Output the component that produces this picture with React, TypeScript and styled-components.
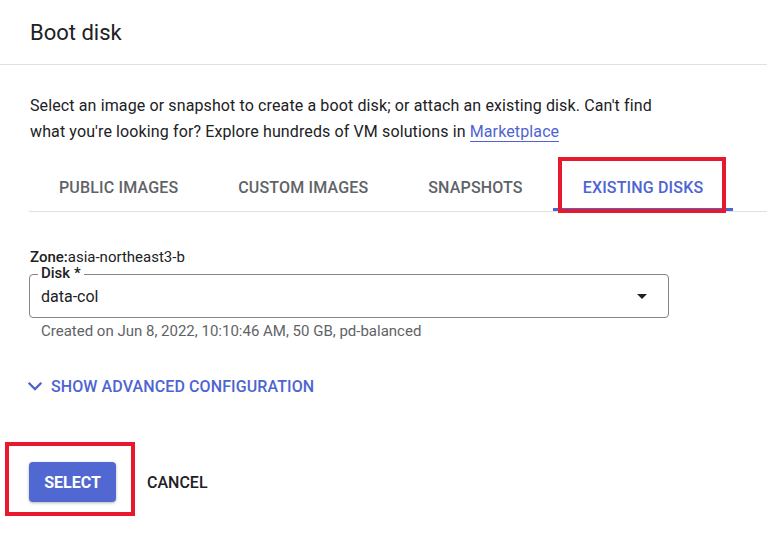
import React from 'react';
import styled, { createGlobalStyle } from 'styled-components';

const BLUE = '#4e64d3';
const RED = '#e8192c';

const GlobalStyle = createGlobalStyle`
  *, *::before, *::after {
    box-sizing: border-box;
  }
  body {
    margin: 0;
    background: #fff;
    font-family: Roboto, "Liberation Sans", Arial, sans-serif;
    color: #202124;
  }
`;

const tabs = ['Public images', 'Custom images', 'Snapshots', 'Existing disks'];

const App: React.FC = () => {
  return (
    <>
      <GlobalStyle />
      <StyledPanel>
        <StyledHeader>Boot disk</StyledHeader>
        <StyledBody>
          <StyledDescription>
            Select an image or snapshot to create a boot disk; or attach an existing disk. Can't find
            what you're looking for? Explore hundreds of VM solutions in{' '}
            <StyledLink href="#">Marketplace</StyledLink>
          </StyledDescription>

          <StyledTabs>
            {tabs.map((t, i) => (
              <StyledTab key={t} $active={i === tabs.length - 1}>
                {t}
                {i === tabs.length - 1 && <StyledTabMark />}
              </StyledTab>
            ))}
          </StyledTabs>

          <StyledZone>
            <b>Zone:</b>asia-northeast3-b
          </StyledZone>

          <StyledField>
            <StyledFieldLabel>Disk *</StyledFieldLabel>
            <StyledFieldValue>data-col</StyledFieldValue>
            <StyledCaret viewBox="0 0 10 5" aria-hidden>
              <path d="M0 0h10L5 5z" fill="#202124" />
            </StyledCaret>
          </StyledField>
          <StyledHint>Created on Jun 8, 2022, 10:10:46 AM, 50 GB, pd-balanced</StyledHint>

          <StyledAdvanced>
            <svg width="24" height="24" viewBox="0 0 24 24" aria-hidden>
              <path d="M16.59 8.59 12 13.17 7.41 8.59 6 10l6 6 6-6z" fill={BLUE} />
            </svg>
            Show advanced configuration
          </StyledAdvanced>

          <StyledActions>
            <StyledSelect>
              Select
              <StyledButtonMark />
            </StyledSelect>
            <StyledCancel>Cancel</StyledCancel>
          </StyledActions>
        </StyledBody>
      </StyledPanel>
    </>
  );
};

const StyledPanel = styled.div`
  width: 767px;
  height: 534px;
  background: #fff;
`;

const StyledHeader = styled.div`
  height: 65px;
  display: flex;
  align-items: center;
  padding: 1px 0 0 30px;
  border-bottom: 1px solid #e0e0e0;
  font-size: 22px;
  color: #202124;
`;

const StyledBody = styled.div`
  display: flex;
  flex-direction: column;
  padding: 28px 0 0 30px;
`;

const StyledDescription = styled.p`
  margin: 0;
  max-width: 650px;
  font-size: 16px;
  line-height: 26px;
  letter-spacing: 0.12px;
  color: #202124;
`;

const StyledLink = styled.a`
  color: ${BLUE};
  text-decoration: none;
  border-bottom: 1px solid ${BLUE};
`;

const StyledTabs = styled.div`
  display: flex;
  margin: 18px 0 0 -1px;
  border-bottom: 1px solid #e0e0e0;
`;

const StyledTab = styled.div<{ $active?: boolean }>`
  position: relative;
  height: 48px;
  padding: 1px 30px 0;
  display: flex;
  align-items: center;
  font-size: 16px;
  font-weight: 500;
  letter-spacing: 0.16px;
  text-transform: uppercase;
  color: ${p => (p.$active ? BLUE : '#5f6368')};
  box-shadow: ${p => (p.$active ? `inset 0 -3px 0 ${BLUE}` : 'none')};
`;

const StyledTabMark = styled.span`
  position: absolute;
  left: 5px;
  right: 7px;
  top: -6px;
  bottom: -2px;
  border: 4px solid ${RED};
`;

const StyledZone = styled.div`
  margin-top: 35px;
  font-size: 15px;
  line-height: 20px;

  b {
    font-weight: 500;
  }
`;

const StyledField = styled.div`
  position: relative;
  margin: 7px 0 0 -1px;
  width: 640px;
  height: 44px;
  border: 1px solid #80868b;
  border-radius: 4px;
  display: flex;
  align-items: center;
  padding: 0 21px 0 11px;
`;

const StyledFieldLabel = styled.span`
  position: absolute;
  left: 8px;
  top: -10px;
  padding: 0 3px;
  background: #fff;
  font-size: 15px;
  line-height: 16px;
  font-weight: 500;
`;

const StyledFieldValue = styled.span`
  flex: 1;
  font-size: 16px;
`;

const StyledCaret = styled.svg`
  width: 10px;
  height: 5px;
`;

const StyledHint = styled.div`
  margin: 3px 0 0 11px;
  font-size: 15px;
  line-height: 20px;
  color: #5f6368;
`;

const StyledAdvanced = styled.div`
  margin: 33px 0 0 -7px;
  display: flex;
  align-items: center;
  gap: 4px;
  font-size: 16px;
  font-weight: 500;
  letter-spacing: 0.1px;
  text-transform: uppercase;
  color: ${BLUE};

  svg {
    transform: scale(1.2);
  }
`;

const StyledActions = styled.div`
  display: flex;
  align-items: center;
  gap: 31px;
  margin: 64px 0 0 -1px;
`;

const StyledSelect = styled.button`
  position: relative;
  width: 87px;
  height: 40px;
  padding: 0;
  border: none;
  border-radius: 4px;
  background: #5167d1;
  color: #fff;
  font-family: inherit;
  font-size: 16px;
  font-weight: 700;
  text-transform: uppercase;
  box-shadow: 0 1px 3px rgba(0, 0, 0, 0.3);
`;

const StyledButtonMark = styled.span`
  position: absolute;
  left: -24px;
  right: -19px;
  top: -20px;
  bottom: -14px;
  border: 4px solid ${RED};
`;

const StyledCancel = styled.span`
  font-size: 16px;
  font-weight: 500;
  text-transform: uppercase;
  color: #202124;
`;

export default App;
